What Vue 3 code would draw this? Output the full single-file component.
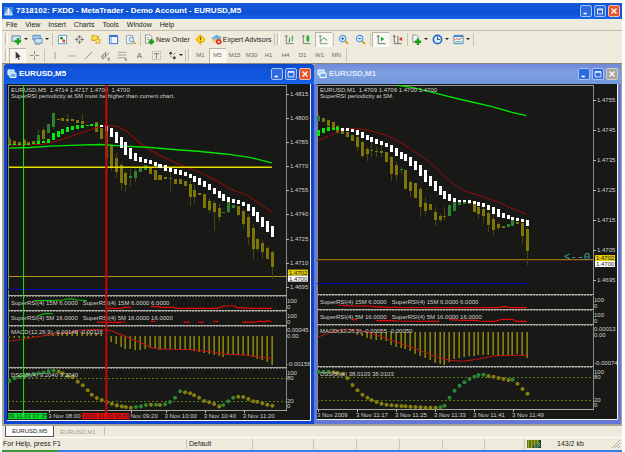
<script setup>
import { ref } from 'vue'

const menus = ['File', 'View', 'Insert', 'Charts', 'Tools', 'Window', 'Help']
const periods = ['M1', 'M5', 'M15', 'M30', 'H1', 'H4', 'D1', 'W1', 'MN']
const period = ref('M5')

// Chart samples are stored in thirds of a unit and converted when drawn.
const pts = (list, x0, y0) => list.map(([x, y]) => `${(x0 + x / 3).toFixed(1)},${(y0 + y / 3).toFixed(1)}`).join(' ')

const left = {
  id: 'm5', title: 'EURUSD,M5', active: true, view: '7 84 303 336',
  x0: 0, first: 9, frame: 8, axis: 285, edge: 271, right: 309.5,
  head: ['EURUSD,M5  1.4714 1.4717 1.4700  1.4700', 'SuperRSI periodicity at SM must be higher than current chart.'],
  rsi1: 'SuperRSI(4) 15M 6.0000   SuperRSI(4) 15M 6.0000 6.0000',
  rsi2: 'SuperRSI(4) 5M 16.0000   SuperRSI(4) 5M 16.0000 16.0000',
  macdLabel: 'MACD(12,26,9) -0.00148 -0.00116', dssLabel: 'DSS(8)(4) 9.2040 9.2040',
  candles: [[0,225,242,0],[1,229,242,0],[2,233,241,0],[3,228,243,0],[4,234,240,0],[5,229,238,0],[6,213,235,1],[7,198,225,0],[8,180,208,1],[9,147,188,1],[10,164,169,0],[11,162,172,0],[12,166,170,0],[13,166,171,0],[14,168,176,0],[15,171,180,0],[18,175,205,0],[19,192,224,0],[20,200,280,0],[21,245,308,0],[22,282,322,0],[23,302,355,0],[24,325,362,0],[25,335,341,1],[26,320,340,1],[27,308,322,1],[28,303,316,1],[29,308,330,0],[30,316,346,0],[31,333,347,0],[32,338,345,0],[33,340,343,1],[34,345,358,0],[35,343,358,0],[36,351,365,0],[37,358,398,0],[38,378,398,0],[39,387,391,0],[40,390,431,0],[41,410,436,0],[42,415,442,0],[43,432,458,0],[44,444,447,1],[45,413,443,1],[46,421,431,1],[47,426,452,0],[48,440,478,0],[49,458,518,0],[50,490,554,0],[51,523,554,0],[52,536,562,0],[53,551,583,0],[54,563,608,0]],
  wicks: [[0,218,246],[3,222,250],[6,198,240],[7,190,235],[9,142,194],[12,150,178],[15,150,178],[21,240,320],[22,265,340],[23,295,378],[24,320,385],[25,315,365],[26,310,352],[33,315,380],[37,350,424],[38,360,420],[41,400,445],[42,410,500],[43,420,470],[45,405,445],[48,435,490],[49,450,540],[50,480,582],[51,520,560],[52,525,582],[53,545,583],[54,560,643]],
  ma: [[0,239,243,1],[1,239,243,1],[2,239,242,1],[3,239,242,1],[4,238,241,1],[5,236,240,1],[6,231,238,1],[7,230,237,1],[8,225,235,1],[9,207,227,1],[10,202,217,1],[11,195,210,1],[12,190,203,1],[13,185,197,1],[14,183,195,1],[15,183,191,1],[16,183,187,1],[17,180,186,1],[18,181,185,1],[19,184,188,0],[20,187,202,0],[21,192,217,0],[22,204,235,0],[23,218,250,0],[24,234,273,0],[25,252,283,0],[26,265,290,0],[27,279,294,0],[28,285,295,0],[29,286,298,0],[30,292,306,0],[31,298,312,0],[32,303,320,0],[33,310,323,0],[34,315,328,0],[35,318,332,0],[36,323,336,0],[37,328,342,0],[38,335,352,0],[39,342,362,0],[40,351,368,0],[41,360,378,0],[42,370,390,0],[43,380,401,0],[44,390,410,0],[45,398,412,0],[46,405,415,0],[47,408,418,0],[48,414,426,0],[49,419,441,0],[50,427,456,0],[51,442,473,0],[52,457,488,0],[53,470,503,0],[54,486,518,0]],
  slow: [[27,243],[70,243],[130,240],[187,226],[246,205],[290,190],[318,184],[350,186],[380,202],[420,238],[450,258],[490,280],[520,293],[550,305],[600,325],[645,348],[690,375],[740,393],[770,413],[813,445]],
  green: [[27,252],[90,250],[150,246],[230,243],[300,241],[360,245],[450,250],[520,256],[600,262],[680,270],[750,280],[813,296]],
  rsiGreen: [[[103,14],[150,14],[190,13],[200,10],[215,9],[230,13],[260,14]], [[110,61],[120,58],[135,53],[158,54]]],
  rsiRed: [[[318,38],[365,38],[370,35],[393,35]], [[450,33],[478,33],[480,35],[520,35],[528,38],[650,38],[670,31],[700,31],[710,36],[750,38],[813,38]], [[290,79],[360,80],[376,77]], [[450,77],[465,77]], [[550,79],[567,79]], [[593,79],[610,80]], [[638,77],[653,77]], [[725,79],[760,79],[780,76],[790,79],[800,73],[812,79]]],
  zero: 120,
  macd: [128,128,128,127,126,125,124,122,117,113,110,109,109,109,109,110,110,111,113,116,119,137,145,152,158,160,161,161,158,157,157,162,160,160,160,161,162,163,165,168,172,175,177,180,182,178,178,177,177,179,184,188,193,199,208],
  signal: [[27,136],[70,130],[130,120],[190,112],[250,103],[290,101],[330,104],[370,120],[420,140],[460,157],[500,160],[560,161],[620,166],[680,175],[740,178],[780,184],[813,188]],
  dss: [255,247,242,240,236,234,232,230,226,224,227,232,240,244,257,268,283,296,306,312,319,323,328,331,333,335,333,331,327,326,326,327,325,318,305,286,289,292,298,305,315,319,324,331,327,316,305,302,303,309,316,317,322,326,329],
  dssGreen: [0,1,2,3,4,5,6,7,8,9,26,27,28,30,32,33,34,35,44,45,46],
  scale: [['1.4815',94],['1.4800',118],['1.4785',142],['1.4770',166],['1.4755',190],['1.4740',214],['1.4725',238],['1.4710',262],['1.4695',286]],
  small: [['100',300],['0',306],['100',315],['0',321],['0.00045',329],['0.00',335],['-0.00156',363],['100',372],['80',377],['20',400],['0',405]],
  times: [['3 Nov 08:00',48],['Nov 09:20',130],['3 Nov 10:00',164],['3 Nov 10:40',203],['3 Nov 11:20',242]],
  gold: 275, blue: 288, ask: 269, bid: 275,
}

const right = {
  id: 'm1', title: 'EURUSD,M1', active: false, view: '317 84 301 336',
  x0: 312, first: 318, frame: 317, axis: 593, edge: 527, right: 617.5,
  head: ['EURUSD,M1  1.4709 1.4709 1.4700 1.4700', 'SuperRSI periodicity at SM.'],
  rsi1: 'SuperRSI(4) 15M 6.0000   SuperRSI(4) 15M 6.0000 6.0000',
  rsi2: 'SuperRSI(4) 5M 16.0000   SuperRSI(4) 5M 16.0000 16.0000',
  macdLabel: 'MACD(12,26,9) -0.00055 -0.00050', dssLabel: 'DSS(8)(4) 38.0103 38.0103',
  candles: [[0,156,170,1],[1,162,173,0],[2,168,185,0],[3,175,193,0],[4,186,206,0],[5,200,210,0],[6,204,218,0],[7,212,230,0],[8,220,250,0],[9,234,276,0],[10,255,270,0],[11,259,262,1],[12,261,265,0],[13,262,266,0],[14,264,293,0],[15,279,330,0],[16,303,333,0],[17,315,318,1],[18,318,375,0],[19,354,380,0],[20,356,401,0],[21,375,428,0],[22,416,441,0],[23,420,437,0],[24,444,468,0],[25,456,468,0],[26,455,458,0],[27,423,456,1],[28,414,441,1],[29,413,423,1],[30,413,420,1],[31,414,421,0],[32,416,444,0],[33,430,449,0],[34,435,456,0],[35,446,483,0],[36,465,497,0],[37,480,493,0],[38,486,491,0],[39,479,489,1],[40,468,485,1],[41,473,481,0],[42,476,515,0],[43,495,561,0]],
  wicks: [[0,148,170],[4,184,210],[8,210,262],[9,230,280],[10,248,290],[11,230,280],[12,250,280],[13,235,280],[15,275,350],[16,290,350],[17,305,330],[19,350,400],[21,370,458],[22,400,452],[24,430,486],[25,450,475],[26,430,468],[33,425,465],[34,430,478],[35,440,503],[36,450,512],[37,475,498],[42,470,540],[43,490,603]],
  ma: [[0,197,215,1],[1,192,207,1],[2,189,200,1],[3,191,198,1],[4,189,198,1],[5,192,200,0],[6,193,200,0],[7,195,204,0],[8,197,212,0],[9,204,222,0],[10,212,228,0],[11,219,234,0],[12,226,239,0],[13,231,244,0],[14,236,250,0],[15,243,263,0],[16,251,277,0],[17,263,284,0],[18,270,291,0],[19,280,306,0],[20,291,319,0],[21,304,335,0],[22,318,353,0],[23,335,366,0],[24,350,381,0],[25,365,393,0],[26,380,404,0],[27,391,410,0],[28,401,414,0],[29,407,415,0],[30,408,415,0],[31,409,416,0],[32,412,419,0],[33,414,425,0],[34,418,430,0],[35,423,439,0],[36,430,451,0],[37,436,458,0],[38,446,463,0],[39,452,465,0],[40,458,468,0],[41,461,470,0],[42,464,473,0],[43,468,485,0]],
  slow: [[18,230],[50,217],[90,198],[130,192],[170,199],[220,213],[260,232],[300,258],[350,292],[390,330],[410,348],[445,375],[465,383],[510,397],[560,415],[600,434],[643,451]],
  green: [[255,64],[300,70],[350,82],[400,95],[440,105],[480,114],[540,128],[600,145],[643,155]],
  rsiGreen: [],
  rsiRed: [[[79,30],[114,33],[174,33],[184,35],[239,38],[249,35],[254,37],[554,38],[579,35],[594,38],[644,38]], [[120,74],[134,74]], [[192,77],[234,76],[254,78],[381,79]], [[412,74],[454,76],[494,76],[499,78],[549,79],[569,73],[601,73],[614,79],[644,79]]],
  zero: 110,
  macd: [114,112,110,106,105,106,107,112,120,124,128,131,134,135,137,150,155,158,162,168,176,183,190,196,203,208,209,202,193,190,187,184,182,180,180,180,181,182,182,181,180,178,180,188],
  signal: [[17,127],[54,112],[104,103],[144,106],[194,120],[244,138],[294,155],[334,170],[374,186],[414,196],[454,199],[494,193],[544,183],[594,181],[644,181]],
  dss: [230,230,230,232,234,238,250,270,286,299,308,315,321,326,329,331,332,333,334,335,336,337,338,338,338,337,332,308,287,272,262,252,245,240,239,243,245,249,252,255,254,266,282,296],
  dssGreen: [0,1,2,25,26,27,28,29,30,31,32,33,34,40],
  scale: [['1.4755',100],['1.4745',130],['1.4735',160],['1.4725',190],['1.4715',220],['1.4705',250],['1.4695',280]],
  small: [['100',300],['0',306],['100',315],['0',321],['0.00013',329],['0.00',335],['-0.00074',363],['100',372],['80',377],['20',400],['0',405]],
  times: [['3 Nov 2009',317],['3 Nov 11:17',356],['3 Nov 11:25',395],['3 Nov 11:33',434],['3 Nov 11:41',473],['3 Nov 11:49',512]],
  gold: 259, blue: 283, ask: 255, bid: 261,
}
const windows = [left, right]

const barX = (w, i) => Math.round(w.first + (i * (w.edge - w.first)) / (w.dss.length - 1))
</script>

<template>
  <div class="app">
    <header class="titlebar">
      <svg class="logo" viewBox="0 0 10 10"><rect width="10" height="10" fill="#3f8ade" /><path d="M1 8.500L5 1.500 9 8.500zM3 8L5 4.500 7 8M5 2v6" fill="none" stroke="#fff" /></svg>
      <h1>7318102: FXDD - MetaTrader - Demo Account - EURUSD,M5</h1>
      <div class="winbtns">
        <button aria-label="Minimize"><svg viewBox="0 0 12 12"><path d="M3 9h4" stroke="#fff" stroke-width="2" /></svg></button>
        <button aria-label="Restore"><svg viewBox="0 0 12 12"><path d="M3 3.500h6v6h-6zM3 4.500h6" fill="none" stroke="#fff" /></svg></button>
        <button class="close" aria-label="Close"><svg viewBox="0 0 12 12"><path d="M3 3l6 6M9 3l-6 6" stroke="#fff" stroke-width="1.600" /></svg></button>
      </div>
    </header>

    <nav class="menubar"><button v-for="m in menus" :key="m">{{ m }}</button></nav>

    <div class="toolbar">
      <i class="grip"></i>
      <button class="tool drop" aria-label="New chart"><svg viewBox="0 0 12 12"><path d="M1 2h9v6h-9z" fill="#cfe3ef" stroke="#58829c" /><path d="M7.500 4.500v7M4 8h7" stroke="#12a012" stroke-width="2.600" /></svg></button>
      <button class="tool drop" aria-label="Profiles"><svg viewBox="0 0 12 12"><path d="M1 1.500h8v5h-8z" fill="#a9c9ee" stroke="#5486c4" /><path d="M3 5h8v5h-8z" fill="#d6e6f8" stroke="#5486c4" /><path d="M3 11.500h6" stroke="#8ba6c6" /></svg></button>
      <i class="sep"></i>
      <button class="tool" aria-label="Market Watch"><svg viewBox="0 0 12 12"><path d="M1.500 1.500h9v9h-9z" fill="#fff" stroke="#5f95c8" /><circle cx="5" cy="4.500" r="1.600" fill="#0c9a1c" /><circle cx="7.500" cy="7.500" r="1.700" fill="#e04a28" /></svg></button>
      <button class="tool" aria-label="Data Window"><svg viewBox="0 0 12 12"><circle cx="6" cy="6" r="3.200" fill="none" stroke="#888" /><path d="M6 1v4M6 7v4M1 6h4M7 6h4" stroke="#777" stroke-width="1.200" /></svg></button>
      <button class="tool" aria-label="Navigator"><svg viewBox="0 0 12 12"><path d="M1 1.500h3l1 1h3v4.500h-7z" fill="#ffe14a" stroke="#c8971c" /><path d="M7.500 4l1 2.300 2.500.2-2 1.700.7 2.500-2.200-1.400-2.200 1.400.7-2.500-2-1.700 2.500-.2z" fill="#fff06a" stroke="#c8971c" stroke-width=".8" /></svg></button>
      <button class="tool" aria-label="Terminal"><svg viewBox="0 0 12 12"><path d="M1.500 1.500h9v9h-9z" fill="#eef5ff" stroke="#2b6cc4" /><path d="M2 2.500h8" stroke="#2b6cc4" stroke-width="1.500" /><path d="M3.500 3v7" stroke="#6c98d0" /></svg></button>
      <button class="tool" aria-label="Strategy Tester"><svg viewBox="0 0 12 12"><path d="M1.500 1.500h7v9h-7z" fill="#eef2f5" stroke="#8a9fb5" /><circle cx="7" cy="6" r="2.500" fill="#cfe6fa" stroke="#6f94b8" /><path d="M9 8l2.500 3" stroke="#d09a20" stroke-width="1.500" /></svg></button>
      <i class="sep"></i>
      <button class="tool wide"><svg viewBox="0 0 12 12"><path d="M1.500 1h5l2 2v7h-7z" fill="#fff" stroke="#8d8d8d" /><path d="M3 4h3M3 6h3" stroke="#999" /><path d="M8 5.500v6M5 8.500h6" stroke="#12a012" stroke-width="2.600" /></svg>New Order</button>
      <button class="tool" aria-label="MetaEditor"><svg viewBox="0 0 12 12"><path d="M6 .8L11.200 6 6 11.200.8 6z" fill="#ffd21c" stroke="#d8a400" /><path d="M6 3v3.500M6 7.500v1.300" stroke="#7c5800" stroke-width="1.300" /></svg></button>
      <button class="tool wide"><svg viewBox="0 0 12 12"><path d="M1 5l5-3.500 5 2.500-5 3z" fill="#70b3e6" stroke="#4287b8" /><ellipse cx="5.500" cy="6.500" rx="3.500" ry="3" fill="#efc95c" /><path d="M1 5l5-3.500 5 2.500-5 2z" fill="#70b3e6" /><circle cx="8.500" cy="8.500" r="3" fill="#e02d20" /><path d="M7.500 7.500h2v2h-2z" fill="#fff" /></svg>Expert Advisors</button>
      <i class="sep"></i><i class="grip"></i>
      <button class="tool" aria-label="Bar chart"><svg viewBox="0 0 12 12"><path d="M2.500 1v9.500h8M1 2.500h3" fill="none" stroke="#777" /><path d="M6 4v5M5 8h1M9 2v6M9 3h1" stroke="#2b8a3a" /></svg></button>
      <button class="tool" aria-label="Candlesticks"><svg viewBox="0 0 12 12"><path d="M2.500 1v9.500h8M1 2.500h3" fill="none" stroke="#777" /><path d="M7.500 1v8" stroke="#167a28" /><path d="M6 2.500h3v5h-3z" fill="#16b82f" /></svg></button>
      <button class="tool pressed" aria-label="Line chart"><svg viewBox="0 0 12 12"><path d="M2.500 1v9.500h8M1 2.500h3" fill="none" stroke="#888" /><path d="M3 8l3-4 4 3" fill="none" stroke="#2ca23e" /></svg></button>
      <i class="sep"></i>
      <button class="tool" aria-label="Zoom in"><svg viewBox="0 0 12 12"><path d="M7.500 7.500l3.500 3.500" stroke="#d8a520" stroke-width="2.200" /><circle cx="5" cy="5" r="3.500" fill="#d2eaff" stroke="#5c9bd6" stroke-width="1.300" /><path d="M3.500 5h3M5 3.500v3" stroke="#1d5ea8" /></svg></button>
      <button class="tool" aria-label="Zoom out"><svg viewBox="0 0 12 12"><path d="M7.500 7.500l3.500 3.500" stroke="#d8a520" stroke-width="2.200" /><circle cx="5" cy="5" r="3.500" fill="#d2eaff" stroke="#5c9bd6" stroke-width="1.300" /><path d="M3.500 5h3" stroke="#1d5ea8" /></svg></button>
      <i class="sep"></i>
      <button class="tool pressed" aria-label="Auto scroll"><svg viewBox="0 0 12 12"><path d="M3.500 1v9.500h8M2 2.500h3" fill="none" stroke="#666" /><path d="M6.500 3l3.500 2.500L6.500 8z" fill="#10a52b" /></svg></button>
      <button class="tool" aria-label="Chart shift"><svg viewBox="0 0 12 12"><path d="M2.500 1v9.500h8M1 2.500h3M6.500 2v8" fill="none" stroke="#666" /><path d="M11 3L7.500 5.500 11 8z" fill="#d8391e" /></svg></button>
      <i class="sep"></i>
      <button class="tool drop" aria-label="Indicators"><svg viewBox="0 0 12 12"><path d="M2 1h4l2 2v6h-6z" fill="#f5f5f5" stroke="#888" /><path d="M7.500 5v7M4 8.500h7" stroke="#12a012" stroke-width="2.600" /></svg></button>
      <button class="tool drop" aria-label="Periods"><svg viewBox="0 0 12 12"><circle cx="6" cy="6" r="4.500" fill="#dceeff" stroke="#1d64d0" stroke-width="1.700" /><path d="M6 3v3h2.500" fill="none" stroke="#333" /></svg></button>
      <button class="tool drop" aria-label="Templates"><svg viewBox="0 0 12 12"><path d="M1 1.500h10v9h-10z" fill="#f3f8ff" stroke="#3d82c4" /><path d="M1 2.500h10" stroke="#3d82c4" stroke-width="1.500" /><path d="M2.500 6l2-1 2 1 3-1.500" fill="none" stroke="#d04030" /><path d="M2.500 8.500h7" stroke="#3d9a50" /></svg></button>
      <i class="sep"></i>
    </div>

    <div class="toolbar tools2">
      <i class="grip"></i>
      <button class="tool pressed" aria-label="Cursor"><svg viewBox="0 0 12 12"><path d="M4 1.500v8l2-1.700 1.300 3 1.200-.6-1.300-2.700 2.300-.3z" fill="#333" /></svg></button>
      <button class="tool" aria-label="Crosshair"><svg viewBox="0 0 12 12"><path d="M6 1v4M6 7v4M1 6h4M7 6h4" stroke="#888" /></svg></button>
      <i class="sep"></i>
      <button class="tool" aria-label="Vertical line"><svg viewBox="0 0 12 12"><path d="M6.500 2v8" stroke="#999" /></svg></button>
      <button class="tool" aria-label="Horizontal line"><svg viewBox="0 0 12 12"><path d="M3 6.500h7" stroke="#999" /></svg></button>
      <button class="tool" aria-label="Trendline"><svg viewBox="0 0 12 12"><path d="M2 10l8-8" stroke="#888" /></svg></button>
      <button class="tool" aria-label="Channel"><svg viewBox="0 0 12 12"><path d="M1 8l6-6M3 10l7-7M3 5v5M6 3v5M8 9h3M8 11h3" stroke="#777" /></svg></button>
      <button class="tool" aria-label="Fibonacci"><svg viewBox="0 0 12 12"><path d="M1 2.500h9M1 5.500h9M1 8.500h7" stroke="#888" stroke-dasharray="2 .5" /><path d="M9 8v3h2" fill="none" stroke="#666" /></svg></button>
      <button class="tool letter">A</button>
      <button class="tool" aria-label="Text label"><svg viewBox="0 0 12 12"><path d="M1.500 1.500h9v9h-9z" fill="none" stroke="#999" stroke-dasharray="1 1" /><path d="M3 4h6M6 4v5" stroke="#777" /></svg></button>
      <button class="tool drop narrow" aria-label="Arrows"><svg viewBox="0 0 12 12"><path d="M2 3.500l2-2 2 2-2 2zM6 8.500l2-2 2 2-2 2z" fill="#444" /><path d="M3 6l2 2M9 3l-2 2" stroke="#777" /></svg></button>
      <i class="sep"></i><i class="grip"></i>
      <button v-for="p in periods" :key="p" class="tool" :class="{ pressed: p === period }" @click="period = p">{{ p }}</button>
      <i class="sep"></i>
    </div>

    <main class="mdi">
      <section v-for="w in windows" :key="w.id" class="child" :class="{ inactive: !w.active }">
        <header class="childbar">
          <svg class="doc" viewBox="0 0 10 10"><path d="M1 1h6v5h-6z" fill="#9fd0ff" stroke="#fff" /><path d="M3 4h6v4.500h-6z" fill="#6aaef0" stroke="#fff" /></svg>
          <h2>{{ w.title }}</h2>
          <div class="winbtns">
            <button aria-label="Minimize"><svg viewBox="0 0 12 12"><path d="M3 9h4" stroke="#fff" stroke-width="2" /></svg></button>
            <button aria-label="Maximize"><svg viewBox="0 0 12 12"><path d="M2.500 3h7v6.500h-7zM2.500 4h7" fill="none" stroke="#fff" /></svg></button>
            <button class="close" aria-label="Close"><svg viewBox="0 0 12 12"><path d="M3 3l6 6M9 3l-6 6" stroke="#fff" stroke-width="1.600" /></svg></button>
          </div>
        </header>
        <svg class="chart" :viewBox="w.view" role="img" :aria-label="w.title">
          <rect :x="w.frame - 1" y="84" width="303" height="336" fill="#181816" />
          <g shape-rendering="crispEdges">
            <path :d="`M${w.frame} 85.500H${w.axis}`" stroke="#9a9a94" />
            <path :d="`M${w.frame + .5} 85V409M${w.axis + .5} 85V409`" stroke="#8c8c86" />
            <path :d="`M${w.frame} 294.500H${w.axis + 1}M${w.frame} 309.500H${w.axis + 1}M${w.frame} 324.500H${w.axis + 1}M${w.frame} 366.500H${w.axis + 1}M${w.frame} 409.500H${w.axis + 1}`" stroke="#a8a8a0" />
            <path :d="`M${w.frame} 295.500H${w.axis + 1}M${w.frame} 310.500H${w.axis + 1}M${w.frame} 325.500H${w.axis + 1}M${w.frame} 367.500H${w.axis + 1}`" stroke="#77776f" stroke-dasharray="2 1" />
            <path v-for="s in w.scale" :key="s[0]" :d="`M${w.axis} ${s[1] + .5}h3`" stroke="#b8b8b0" />
            <path v-for="t in w.times" :key="t[0]" :d="`M${t[1] + 1.5} 409v3`" stroke="#b8b8b0" />
            <path :d="`M${w.frame} ${w.gold + .5}H${w.axis}`" :stroke="w.active ? '#b88f22' : '#8a7a10'" />
            <path v-if="!w.active" :d="`M${w.frame} 260.500H${w.axis}`" stroke="#8c1c10" stroke-dasharray="1 1" />
            <path :d="`M${w.frame} ${w.blue + .5}H${w.edge}`" stroke="#0808b0" />
            <rect v-for="k in w.wicks" :key="'w' + k[0]" :x="barX(w, k[0])" :y="64 + k[1] / 3" width="1" :height="(k[2] - k[1]) / 3" fill="#45450c" />
            <rect v-for="k in w.candles" :key="'c' + k[0]" :x="barX(w, k[0]) - 1" :y="64 + k[1] / 3" width="3" :height="(k[2] - k[1]) / 3" :fill="k[3] ? '#2c8430' : '#7c7608'" />
          </g>
          <g fill="none">
            <polyline :points="pts(w.slow, w.x0, 64)" stroke="#960c08" />
            <polyline :points="pts(w.green, w.x0, 64)" stroke="#04e404" stroke-width="1.300" />
            <path v-if="w.active" d="M9 167H271" stroke="#e6e000" stroke-width="1.300" />
          </g>
          <g shape-rendering="crispEdges">
            <rect v-for="k in w.ma" :key="'m' + k[0]" :x="barX(w, k[0]) - 1" :y="64 + k[1] / 3" width="3" :height="(k[2] - k[1]) / 3" :fill="k[3] ? '#08e808' : '#fff'" />
            <rect v-for="(v, i) in w.macd" :key="'h' + i" :x="barX(w, i)" :y="295 + Math.min(v, w.zero) / 3" width="1" :height="Math.abs(v - w.zero) / 3" fill="#858008" />
            <rect v-for="(v, i) in w.macd" :key="'g' + i" :x="barX(w, i) - 1" :y="295 + Math.min(v, w.zero) / 3" width="1" :height="Math.abs(v - w.zero) / 3" fill="#5c5a10" />
            <path :d="`M${w.frame} 377.500H${w.axis}M${w.frame} 400.500H${w.axis}`" stroke="#5e7c10" stroke-dasharray="2 2" />
          </g>
          <g fill="none">
            <polyline :points="pts(w.signal, w.x0, 295)" stroke="#c01410" />
            <polyline v-for="(l, i) in w.rsiGreen" :key="'a' + i" :points="pts(l, w.x0, 295)" stroke="#08c808" />
            <polyline v-for="(l, i) in w.rsiRed" :key="'b' + i" :points="pts(l, w.x0, 295)" stroke="#e80808" stroke-width="1.200" />
          </g>
          <circle v-for="(v, i) in w.dss" :key="'d' + i" :cx="barX(w, i) + .5" :cy="295 + v / 3" r="2" :fill="w.dssGreen.includes(i) ? '#2c8834' : '#86800c'" />
          <g class="label">
            <text v-for="(h, i) in w.head" :key="h" :x="w.frame + 3" :y="92 + i * 6">{{ h }}</text>
            <text :x="w.frame + 3" y="304">{{ w.rsi1 }}</text>
            <text :x="w.frame + 3" y="319">{{ w.rsi2 }}</text>
            <text :x="w.frame + 3" y="333">{{ w.macdLabel }}</text>
            <text :x="w.frame + 3" y="376">{{ w.dssLabel }}</text>
            <text v-for="s in w.scale" :key="s[0]" :x="w.axis + 4" :y="s[1] + 2">{{ s[0] }}</text>
            <text v-for="(s, i) in w.small" :key="'s' + i" :x="w.axis + 1" :y="s[1] + 2">{{ s[0] }}</text>
            <text v-for="t in w.times" :key="t[0]" :x="t[1]" y="417">{{ t[0] }}</text>
          </g>
          <rect :x="w.axis + 2" :y="w.ask" width="20" height="6" fill="#e0cc00" />
          <text class="price" :x="w.axis + 3" :y="w.ask + 5">1.4702</text>
          <rect :x="w.axis + 2" :y="w.bid" width="20" height="6" fill="#fff" />
          <text class="price" :x="w.axis + 3" :y="w.bid + 5">1.4700</text>
          <text v-if="!w.active" class="arrow" x="564" y="260">&lt;--0</text>
          <template v-if="w.active">
            <path d="M23.500 85V412" stroke="#10e810" />
            <path d="M106 85V412" stroke="#8c0a0a" stroke-width="2" />
            <path d="M106 85V412" stroke="#e01010" stroke-width="2" stroke-dasharray="1 1" />
            <rect x="8" y="412" width="39" height="6" fill="#08e830" />
            <text class="price" x="8" y="417">09.11.03 07:35</text>
            <rect x="82" y="412" width="47" height="6" fill="#f00808" />
            <text class="price" x="83" y="417">2009.11.03 08:55</text>
          </template>
          <path :d="`M${w.frame - 1} 419.500H${w.right}V84`" fill="none" stroke="#f4f2ea" />
        </svg>
      </section>
    </main>

    <div class="tabs">
      <button class="tab on">EURUSD,M5</button>
      <button class="tab">EURUSD,M1</button>
      <i class="sep"></i>
      <div class="scroll"><button aria-label="Scroll left"><i class="al"></i></button><button aria-label="Scroll right"><i class="ar"></i></button></div>
    </div>
    <footer class="status">
      <span>For Help, press F1</span><span>Default</span><span v-for="n in 6" :key="n"></span>
      <span class="net"><svg viewBox="0 0 14 8"><rect width="14" height="8" fill="#26421c" /><path d="M1.500 0v8M4.500 0v8M7.500 0v6M10.500 0v4" stroke="#9cac18" stroke-width="2" /><path d="M7 8l6-5M10 8l3-3" stroke="#60b8e8" /></svg>143/2 kb</span>
      <svg class="size" viewBox="0 0 8 8"><path d="M0 8L8 0M3 8l5-5M6 8l2-2" stroke="#aca899" /></svg>
    </footer>
    <div class="taskbar"><i></i></div>
  </div>
</template>

<style>
body { background: #fff; }
</style>

<style scoped>
.app {
  display: flex;
  flex-direction: column;
  padding: 3px 3px 0 2px;
  background: #fff;
  font-family: "Liberation Sans", Arial, sans-serif;
  font-size: 7px;
  color: #222;
}
button { margin: 0; padding: 0; border: 0; background: none; font: inherit; color: inherit; }
svg { display: block; }
h1, h2 { margin: 0; font-size: 8px; line-height: 12px; font-weight: bold; color: #fff; white-space: nowrap; }
.titlebar {
  display: flex;
  align-items: center;
  gap: 3px;
  height: 16px;
  padding: 0 2px;
  background: linear-gradient(#1557d6, #0b52d6 70%, #1668f0);
}
.logo { width: 9px; height: 9px; }
.winbtns { display: flex; gap: 2px; margin-left: auto; }
.winbtns button { width: 12px; height: 12px; border: 1px solid #a8c4f4; border-radius: 2px; background: #2f69df; }
.winbtns .close { background: #e4562a; border-color: #f2c0a8; }
.winbtns svg { width: 10px; height: 10px; }
.menubar {
  display: flex;
  align-items: center;
  gap: 8px;
  height: 11px;
  padding-left: 4px;
  background: #eeebdd;
  border-bottom: 1px solid #c8bba8;
}
.toolbar { display: flex; align-items: center; height: 16px; padding-left: 2px; background: #eeebdd; }
.tools2 { height: 17px; border-bottom: 1px solid #8c887c; box-sizing: border-box; color: #6a6a64; font-size: 6px; }
.tool { display: flex; align-items: center; justify-content: center; width: 17px; height: 15px; flex: none; }
.tool svg { width: 11px; height: 11px; flex: none; }
.tool.wide { width: auto; gap: 1px; padding: 0 2px; font-size: 7px; white-space: nowrap; color: #222; }
.tool.letter { font-size: 8px; }
.tool.drop { width: 21px; gap: 2px; }
.tool.narrow { width: 19px; gap: 1px; }
.tool.drop::after { content: ""; border: 2px solid transparent; border-top-color: #222; border-bottom: 0; }
.tool.pressed { background: #f7f6f0; box-shadow: inset 1px 1px #b9b5a5, inset -1px -1px #fff; }
.grip { width: 1px; height: 12px; margin: 0 1px; border-left: 1px solid #c4c0ae; border-right: 1px solid #fff; }
.sep { width: 1px; height: 13px; margin: 0 1px; background: #c8c4b2; }
.mdi { display: grid; grid-template-columns: 310fr 307fr; padding: 0 1px 0 2px; background: #a8a493; }
.child { min-width: 0; padding: 0 3px 3px; border-radius: 4px 4px 0 0; background: #0c45d4; }
.childbar {
  display: flex;
  align-items: center;
  gap: 2px;
  height: 20px;
  margin: 0 -3px;
  padding: 0 3px;
  border-radius: 4px 4px 0 0;
  background: linear-gradient(#0b48c8, #1156dc 30%, #0f54da 70%, #1668ec);
}
.child .doc { width: 10px; height: 10px; }
.inactive { background: #6478d8; }
.inactive .childbar { background: linear-gradient(#7188d8, #7c9ee0 40%, #7299dc); }
.inactive h2 { color: #dce6f8; }
.inactive .close { background: #a9a69c; border-color: #d0cec6; }
.chart { width: 100%; height: auto; }
.chart text { font-size: 6px; fill: #d0d0cc; white-space: pre; }
.chart text.price { fill: #222; }
.chart text.arrow { font: 11px "Liberation Mono", monospace; fill: #3ca4a8; }
.tabs { display: flex; align-items: stretch; height: 11px; padding-left: 3px; border-top: 2px solid #aaa696; background: #eeebdd; }
.tab { padding: 0 6px; color: #a09c8c; font-size: 6px; }
.tab.on { color: #222; background: #fff; border: 1px solid #55524a; border-top: 0; }
.tabs .sep { height: 8px; margin: 1px 2px; }
.scroll { display: flex; gap: 8px; margin-left: auto; padding-right: 4px; align-items: center; }
.scroll i { display: block; border: 2px solid transparent; }
.al { border-right-color: #aca899; }
.ar { border-left-color: #aca899; }
.status {
  display: grid;
  grid-template-columns: 184fr 66fr 61fr 43fr 43fr 43fr 42fr 40fr 88fr 10px;
  align-items: center;
  height: 12px;
  border-top: 1px solid #fff;
  background: #eeebdd;
}
.status span { box-sizing: border-box; min-width: 0; height: 10px; line-height: 10px; padding-left: 2px; border-left: 1px solid #c8c4b2; white-space: nowrap; }
.status span:first-child { border-left: 0; padding-left: 1px; }
.status .net { display: flex; align-items: center; gap: 16px; }
.net svg { width: 14px; height: 8px; }
.size { width: 8px; height: 8px; }
.taskbar { height: 2px; background: #2f80e8; }
.taskbar i { display: block; width: 9%; height: 2px; background: #3c963c; }
</style>
